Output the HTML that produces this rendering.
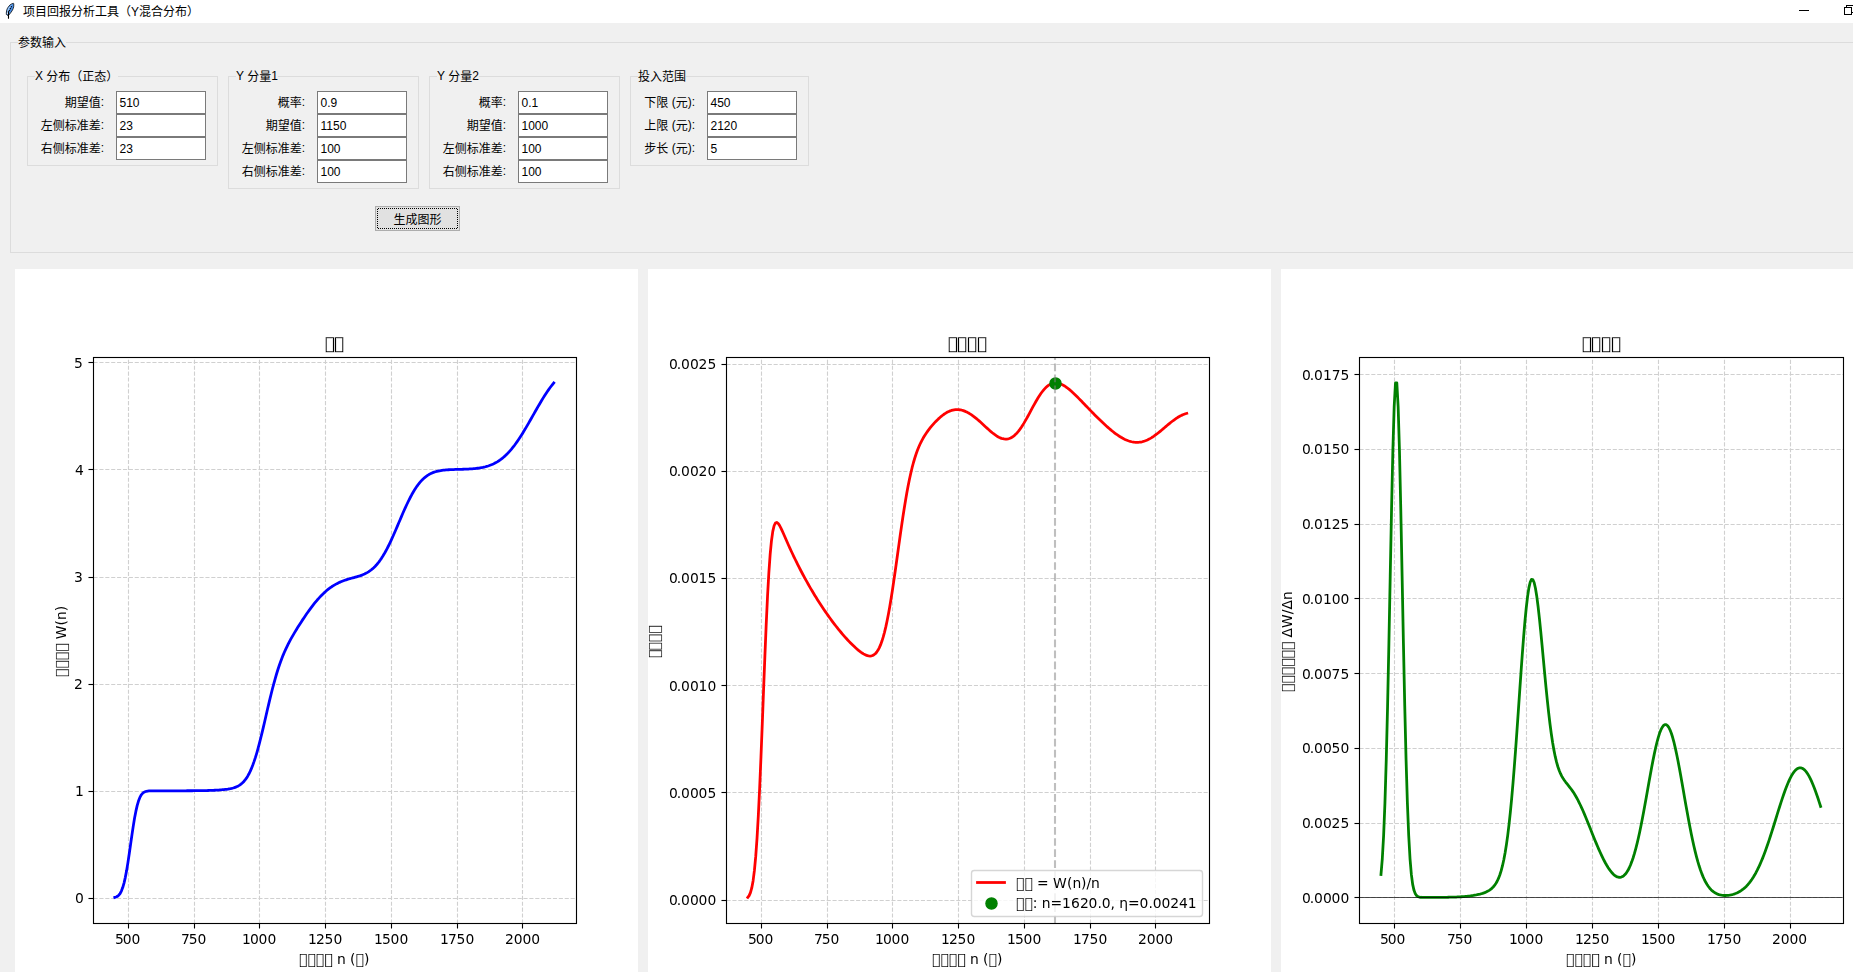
<!DOCTYPE html><html lang="zh-CN"><head><meta charset="utf-8"><title>项目回报分析工具（Y混合分布）</title><style>
*{box-sizing:border-box;margin:0;padding:0}
html,body{width:1853px;height:972px;overflow:hidden;background:#f0f0f0}
body{position:relative;font:12px/16px "Liberation Sans","Noto Sans CJK SC",sans-serif;color:#000}
.abs,.t,.lf,.lft,.en,.lb,.fig,.ico{position:absolute}
.titlebar{position:absolute;left:0;top:0;width:1853px;height:23px;background:#fff}
.t{white-space:nowrap;height:16px;line-height:16px}
.lf{border:1px solid #dcdcdc}
.lft{background:#f0f0f0;height:16px;line-height:16px;white-space:nowrap;padding:0}
.c{position:relative;top:1px}
.lb{height:16px;line-height:16px;white-space:nowrap;text-align:right}
.en{width:90px;height:23px;border:1px solid #7a7a7a;background:#fff;line-height:16px;padding:3px 0 0 2.5px;white-space:nowrap}
.btn{position:absolute;left:375px;top:206px;width:85px;height:25px;border:1px solid #adadad;border-radius:0;background:#e1e1e1;color:#000;font:inherit;text-align:center;line-height:16px;padding:4px 0 3px;display:block;appearance:none;-webkit-appearance:none;outline:0;cursor:default}
.fig{top:269px;will-change:transform}
</style></head><body>
<div class="titlebar"></div>
<svg class="ico" style="left:0;top:0" width="24" height="23" viewBox="0 0 24 23"><path d="M13.4 3.3L13.8 3.8L13.7 6.8Q13.4 8.4 12.5 10L11.2 12.1L9.6 14.1L8.5 15.5L7 15.1L6.3 14.3L6.4 12L6.8 10Q7.2 8.6 7.8 7.7L9.8 5.1Q11.4 3.7 13.4 3.3Z" fill="#4a8fe6" stroke="#000" stroke-opacity=".85" stroke-width=".9" stroke-linejoin="round"/><path d="M12.4 4.3Q10.4 5.4 8.6 7.8Q7.6 9.4 7.2 11.2L7 13.9L8 13.4Q8.3 10.8 9.6 8.4Q10.8 6.2 12.4 4.3Z" fill="#a4cefb"/><path d="M6.9 12.7h1v1.3h-1z" fill="#fff" fill-opacity=".9"/><path d="M8.5 18.3V11.6" stroke="#000" stroke-width="1.1" fill="none" stroke-linecap="round"/><path d="M9.1 11L11.7 6.2" stroke="#000" stroke-width="1.25" stroke-dasharray="1.15 .95" fill="none"/></svg>
<div class="t" style="left:23px;top:4px">项目回报分析工具（Y混合分布）</div>
<svg class="ico" style="left:1790px;top:0" width="63" height="23" viewBox="1790 0 63 23" shape-rendering="crispEdges"><path d="M1799 10.5H1809" stroke="#000" fill="none"/><path d="M1846.5 7V5.5H1853.5V12.5H1852" stroke="#000" fill="none"/><rect x="1844.5" y="7.5" width="7" height="7" stroke="#000" fill="none"/></svg>
<div class="lf" style="left:10px;top:42px;width:1900px;height:211px"></div><div class="lft" style="left:18px;top:34px"><span class="c">参数输入</span></div>
<div class="lf" style="left:27px;top:76px;width:191px;height:90px"></div><div class="lft" style="left:35px;top:68px">X <span class="c">分布（正态）</span></div>
<div class="lf" style="left:228px;top:76px;width:191px;height:113px"></div><div class="lft" style="left:236px;top:68px">Y <span class="c">分量</span>1</div>
<div class="lf" style="left:429px;top:76px;width:191px;height:113px"></div><div class="lft" style="left:437px;top:68px">Y <span class="c">分量</span>2</div>
<div class="lf" style="left:630px;top:76px;width:179px;height:90px"></div><div class="lft" style="left:638px;top:68px"><span class="c">投入范围</span></div>
<div class="lb" style="left:4px;top:94px;width:100px"><span class="c">期望值</span>:</div><div class="en" style="left:116px;top:91px">510</div>
<div class="lb" style="left:4px;top:117px;width:100px"><span class="c">左侧标准差</span>:</div><div class="en" style="left:116px;top:114px">23</div>
<div class="lb" style="left:4px;top:140px;width:100px"><span class="c">右侧标准差</span>:</div><div class="en" style="left:116px;top:137px">23</div>
<div class="lb" style="left:205px;top:94px;width:100px"><span class="c">概率</span>:</div><div class="en" style="left:317px;top:91px">0.9</div>
<div class="lb" style="left:205px;top:117px;width:100px"><span class="c">期望值</span>:</div><div class="en" style="left:317px;top:114px">1150</div>
<div class="lb" style="left:205px;top:140px;width:100px"><span class="c">左侧标准差</span>:</div><div class="en" style="left:317px;top:137px">100</div>
<div class="lb" style="left:205px;top:163px;width:100px"><span class="c">右侧标准差</span>:</div><div class="en" style="left:317px;top:160px">100</div>
<div class="lb" style="left:406px;top:94px;width:100px"><span class="c">概率</span>:</div><div class="en" style="left:518px;top:91px">0.1</div>
<div class="lb" style="left:406px;top:117px;width:100px"><span class="c">期望值</span>:</div><div class="en" style="left:518px;top:114px">1000</div>
<div class="lb" style="left:406px;top:140px;width:100px"><span class="c">左侧标准差</span>:</div><div class="en" style="left:518px;top:137px">100</div>
<div class="lb" style="left:406px;top:163px;width:100px"><span class="c">右侧标准差</span>:</div><div class="en" style="left:518px;top:160px">100</div>
<div class="lb" style="left:595px;top:94px;width:100px"><span class="c">下限</span> (<span class="c">元</span>):</div><div class="en" style="left:707px;top:91px">450</div>
<div class="lb" style="left:595px;top:117px;width:100px"><span class="c">上限</span> (<span class="c">元</span>):</div><div class="en" style="left:707px;top:114px">2120</div>
<div class="lb" style="left:595px;top:140px;width:100px"><span class="c">步长</span> (<span class="c">元</span>):</div><div class="en" style="left:707px;top:137px">5</div>
<button type="button" class="btn"><span class="c">生成图形</span></button>
<svg class="ico" style="left:375px;top:206px" width="85" height="25" viewBox="0 0 85 25" shape-rendering="crispEdges"><path d="M3 2.5H82M3 22.5H82M2.5 3V22M82.5 3V22" fill="none" stroke="#000" stroke-width="1" stroke-dasharray="1 1"/></svg>
<svg class="fig" style="left:15px" width="623" height="735" viewBox="0 0 623 735" font-family="'DejaVu Sans','Liberation Sans',sans-serif" fill="#000"><rect width="623" height="735" fill="#fff"/><path d="M113.5 654.5V88.5M179.5 654.5V88.5M244.5 654.5V88.5M310.5 654.5V88.5M376.5 654.5V88.5M442.5 654.5V88.5M507.5 654.5V88.5M78.5 629.5H561.5M78.5 522.5H561.5M78.5 415.5H561.5M78.5 308.5H561.5M78.5 200.5H561.5M78.5 93.5H561.5" stroke="#b0b0b0" stroke-opacity=".6" stroke-width="1.11" stroke-dasharray="4.11 1.78" fill="none"/><clipPath id="c0"><rect x="77.88" y="88.2" width="482.83" height="565.95"/></clipPath><polyline clip-path="url(#c0)" points="99.82,628.42 101.14,628.01 102.45,627.32 103.76,626.21 105.08,624.52 106.39,622.05 107.71,618.62 109.02,614.07 110.33,608.32 111.65,601.37 112.96,593.36 114.28,584.57 115.59,575.35 116.91,566.14 118.22,557.34 119.53,549.34 120.85,542.39 122.16,536.64 123.48,532.09 124.79,528.66 126.1,526.19 127.42,524.5 128.73,523.39 130.05,522.7 131.36,522.28 132.68,522.05 133.99,521.92 135.3,521.86 136.62,521.82 137.93,521.81 139.25,521.8 140.56,521.8 141.87,521.8 143.19,521.8 144.5,521.8 145.82,521.8 147.13,521.8 148.45,521.8 149.76,521.8 151.07,521.8 152.39,521.79 153.7,521.79 155.02,521.79 156.33,521.79 157.64,521.79 158.96,521.79 160.27,521.79 161.59,521.79 162.9,521.79 164.22,521.78 165.53,521.78 166.84,521.78 168.16,521.78 169.47,521.77 170.79,521.77 172.1,521.76 173.41,521.76 174.73,521.75 176.04,521.75 177.36,521.74 178.67,521.73 179.99,521.72 181.3,521.7 182.61,521.69 183.93,521.68 185.24,521.66 186.56,521.64 187.87,521.62 189.18,521.59 190.5,521.56 191.81,521.53 193.13,521.5 194.44,521.46 195.76,521.41 197.07,521.37 198.38,521.31 199.7,521.25 201.01,521.19 202.33,521.11 203.64,521.03 204.95,520.94 206.27,520.84 207.58,520.73 208.9,520.6 210.21,520.45 211.53,520.29 212.84,520.11 214.15,519.89 215.47,519.64 216.78,519.35 218.1,519.01 219.41,518.61 220.72,518.14 222.04,517.57 223.35,516.9 224.67,516.11 225.98,515.17 227.3,514.05 228.61,512.75 229.92,511.22 231.24,509.44 232.55,507.39 233.87,505.05 235.18,502.39 236.49,499.4 237.81,496.07 239.12,492.4 240.44,488.39 241.75,484.04 243.07,479.39 244.38,474.45 245.69,469.27 247.01,463.89 248.32,458.35 249.64,452.7 250.95,447.01 252.26,441.31 253.58,435.67 254.89,430.13 256.21,424.74 257.52,419.53 258.84,414.53 260.15,409.76 261.46,405.24 262.78,400.98 264.09,396.97 265.41,393.2 266.72,389.67 268.03,386.36 269.35,383.25 270.66,380.32 271.98,377.54 273.29,374.91 274.61,372.38 275.92,369.96 277.23,367.62 278.55,365.35 279.86,363.13 281.18,360.96 282.49,358.83 283.8,356.74 285.12,354.68 286.43,352.64 287.75,350.64 289.06,348.67 290.38,346.72 291.69,344.82 293,342.94 294.32,341.11 295.63,339.31 296.95,337.56 298.26,335.86 299.57,334.2 300.89,332.6 302.2,331.04 303.52,329.55 304.83,328.11 306.15,326.72 307.46,325.4 308.77,324.13 310.09,322.93 311.4,321.78 312.72,320.69 314.03,319.66 315.34,318.69 316.66,317.77 317.97,316.91 319.29,316.1 320.6,315.35 321.92,314.64 323.23,313.98 324.54,313.36 325.86,312.79 327.17,312.25 328.49,311.75 329.8,311.28 331.12,310.84 332.43,310.42 333.74,310.03 335.06,309.65 336.37,309.28 337.69,308.92 339,308.56 340.31,308.19 341.63,307.82 342.94,307.43 344.26,307.01 345.57,306.57 346.89,306.09 348.2,305.56 349.51,304.98 350.83,304.34 352.14,303.63 353.46,302.84 354.77,301.96 356.08,301 357.4,299.93 358.71,298.75 360.03,297.46 361.34,296.05 362.66,294.51 363.97,292.84 365.28,291.04 366.6,289.11 367.91,287.04 369.23,284.84 370.54,282.51 371.85,280.06 373.17,277.5 374.48,274.82 375.8,272.04 377.11,269.18 378.43,266.24 379.74,263.24 381.05,260.19 382.37,257.11 383.68,254.02 385,250.92 386.31,247.84 387.62,244.8 388.94,241.8 390.25,238.86 391.57,236 392.88,233.23 394.2,230.56 395.51,228 396.82,225.56 398.14,223.24 399.45,221.05 400.77,219 402.08,217.08 403.39,215.29 404.71,213.64 406.02,212.13 407.34,210.74 408.65,209.48 409.97,208.34 411.28,207.31 412.59,206.39 413.91,205.57 415.22,204.85 416.54,204.2 417.85,203.64 419.16,203.15 420.48,202.73 421.79,202.36 423.11,202.04 424.42,201.77 425.74,201.54 427.05,201.34 428.36,201.18 429.68,201.04 430.99,200.92 432.31,200.83 433.62,200.74 434.93,200.67 436.25,200.61 437.56,200.56 438.88,200.52 440.19,200.48 441.51,200.44 442.82,200.41 444.13,200.38 445.45,200.34 446.76,200.3 448.08,200.26 449.39,200.22 450.7,200.17 452.02,200.11 453.33,200.05 454.65,199.97 455.96,199.89 457.28,199.79 458.59,199.68 459.9,199.56 461.22,199.41 462.53,199.25 463.85,199.07 465.16,198.86 466.47,198.63 467.79,198.37 469.1,198.08 470.42,197.76 471.73,197.39 473.05,196.99 474.36,196.55 475.67,196.06 476.99,195.53 478.3,194.94 479.62,194.3 480.93,193.6 482.24,192.83 483.56,192.01 484.87,191.12 486.19,190.17 487.5,189.14 488.82,188.04 490.13,186.86 491.44,185.62 492.76,184.29 494.07,182.89 495.39,181.41 496.7,179.86 498.01,178.23 499.33,176.53 500.64,174.75 501.96,172.91 503.27,171 504.59,169.03 505.9,166.99 507.21,164.91 508.53,162.77 509.84,160.59 511.16,158.37 512.47,156.11 513.78,153.83 515.1,151.53 516.41,149.22 517.73,146.9 519.04,144.58 520.36,142.26 521.67,139.96 522.98,137.68 524.3,135.43 525.61,133.2 526.93,131.02 528.24,128.88 529.55,126.8 530.87,124.76 532.18,122.79 533.5,120.88 534.81,119.03 536.13,117.26 537.44,115.56 538.75,113.93" fill="none" stroke="#0000ff" stroke-width="2.78" stroke-linejoin="round" stroke-linecap="square"/><path d="M113.5 654.5v5M179.5 654.5v5M244.5 654.5v5M310.5 654.5v5M376.5 654.5v5M442.5 654.5v5M507.5 654.5v5M78.5 629.5h-5M78.5 522.5h-5M78.5 415.5h-5M78.5 308.5h-5M78.5 200.5h-5M78.5 93.5h-5" stroke="#000" stroke-width="1.11" fill="none"/><path d="M77.94 88.5H562.06M77.94 654.5H562.06M78.5 629.5h-5M78.5 522.5h-5M78.5 415.5h-5M78.5 308.5h-5M78.5 200.5h-5M78.5 93.5h-5" stroke="#000" stroke-opacity=".055" stroke-width="3" fill="none"/><path d="M78.5 88.5H561.5V654.5H78.5Z" stroke="#000" stroke-width="1.11" fill="none" stroke-linejoin="miter"/><text x="100 107.75 116.5" y="675" font-size="13.89">500</text><text x="166 173.75 182.5" y="675" font-size="13.89">750</text><text x="227 234.88 243.62 252.38" y="675" font-size="13.89">1000</text><text x="293 300.88 309.62 318.38" y="675" font-size="13.89">1250</text><text x="359 366.88 375.62 384.38" y="675" font-size="13.89">1500</text><text x="425 432.88 441.62 450.38" y="675" font-size="13.89">1750</text><text x="490 498.75 507.5 516.25" y="675" font-size="13.89">2000</text><text x="60" y="634" font-size="13.89">0</text><text x="60" y="527" font-size="13.89">1</text><text x="59" y="420" font-size="13.89">2</text><text x="59" y="313" font-size="13.89">3</text><text x="60" y="206" font-size="13.89">4</text><text x="59" y="99" font-size="13.89">5</text><text transform="translate(282.85 695.99) scale(1.4110 1.2445)" font-size="13.89" stroke="#fff" stroke-width=".18">▯</text><text transform="translate(291.25 695.99) scale(1.3797 1.2445)" font-size="13.89" stroke="#fff" stroke-width=".18">▯</text><text transform="translate(299.53 695.99) scale(1.4110 1.2445)" font-size="13.89" stroke="#fff" stroke-width=".18">▯</text><text transform="translate(308.01 695.99) scale(1.4110 1.2445)" font-size="13.89" stroke="#fff" stroke-width=".18">▯</text><text x="321.88 330.62 335" y="695" font-size="13.89">n (</text><text transform="translate(339.21 695.99) scale(1.4110 1.2445)" font-size="13.89" stroke="#fff" stroke-width=".18">▯</text><text x="348.88" y="695" font-size="13.89">)</text><text transform="translate(308.62 80.67) scale(1.3920 1.1942)" font-size="16.67" stroke="#fff" stroke-width=".18">▯</text><text transform="translate(317.63 80.67) scale(1.3849 1.1942)" font-size="16.67" stroke="#fff" stroke-width=".18">▯</text><g transform="translate(51 408) rotate(-90)"><text transform="translate(-1.14 0.99) scale(1.4092 1.2445)" font-size="13.89" stroke="#fff" stroke-width=".18">▯</text><text transform="translate(7.25 0.99) scale(1.3760 1.2445)" font-size="13.89" stroke="#fff" stroke-width=".18">▯</text><text transform="translate(15.53 0.99) scale(1.4092 1.2445)" font-size="13.89" stroke="#fff" stroke-width=".18">▯</text><text transform="translate(24.02 0.99) scale(1.4086 1.2445)" font-size="13.89" stroke="#fff" stroke-width=".18">▯</text><text x="37.88 51.62 57.12 65.88" y="0" font-size="13.89">W(n)</text></g></svg>
<svg class="fig" style="left:648px" width="623" height="735" viewBox="0 0 623 735" font-family="'DejaVu Sans','Liberation Sans',sans-serif" fill="#000"><rect width="623" height="735" fill="#fff"/><path d="M113.5 654.5V88.5M179.5 654.5V88.5M244.5 654.5V88.5M310.5 654.5V88.5M376.5 654.5V88.5M442.5 654.5V88.5M507.5 654.5V88.5M78.5 631.5H561.5M78.5 523.5H561.5M78.5 416.5H561.5M78.5 309.5H561.5M78.5 202.5H561.5M78.5 95.5H561.5" stroke="#b0b0b0" stroke-opacity=".6" stroke-width="1.11" stroke-dasharray="4.11 1.78" fill="none"/><clipPath id="c1"><rect x="77.88" y="88.2" width="482.83" height="565.95"/></clipPath><polyline clip-path="url(#c1)" points="99.82,628.42 101.14,626.63 102.45,623.67 103.76,618.97 105.08,611.88 106.39,601.69 107.71,587.68 109.02,569.35 110.33,546.46 111.65,519.21 112.96,488.29 114.28,454.85 115.59,420.4 116.91,386.61 118.22,355.11 119.53,327.22 120.85,303.84 122.16,285.36 123.48,271.69 124.79,262.39 126.1,256.76 127.42,254.02 128.73,253.42 130.05,254.31 131.36,256.16 132.68,258.6 133.99,261.37 135.3,264.3 136.62,267.29 137.93,270.3 139.25,273.28 140.56,276.22 141.87,279.12 143.19,281.97 144.5,284.78 145.82,287.55 147.13,290.27 148.45,292.95 149.76,295.59 151.07,298.18 152.39,300.74 153.7,303.26 155.02,305.73 156.33,308.17 157.64,310.58 158.96,312.94 160.27,315.28 161.59,317.57 162.9,319.84 164.22,322.07 165.53,324.27 166.84,326.43 168.16,328.56 169.47,330.67 170.79,332.74 172.1,334.78 173.41,336.79 174.73,338.77 176.04,340.72 177.36,342.65 178.67,344.54 179.99,346.41 181.3,348.24 182.61,350.05 183.93,351.83 185.24,353.59 186.56,355.31 187.87,357.01 189.18,358.68 190.5,360.32 191.81,361.93 193.13,363.51 194.44,365.06 195.76,366.58 197.07,368.07 198.38,369.53 199.7,370.96 201.01,372.36 202.33,373.72 203.64,375.05 204.95,376.34 206.27,377.59 207.58,378.8 208.9,379.96 210.21,381.07 211.53,382.12 212.84,383.11 214.15,384.02 215.47,384.85 216.78,385.57 218.1,386.18 219.41,386.64 220.72,386.94 222.04,387.03 223.35,386.9 224.67,386.5 225.98,385.78 227.3,384.71 228.61,383.23 229.92,381.3 231.24,378.87 232.55,375.9 233.87,372.34 235.18,368.16 236.49,363.35 237.81,357.89 239.12,351.77 240.44,345.03 241.75,337.69 243.07,329.8 244.38,321.43 245.69,312.65 247.01,303.56 248.32,294.24 249.64,284.81 250.95,275.37 252.26,266.03 253.58,256.88 254.89,248.02 256.21,239.52 257.52,231.44 258.84,223.85 260.15,216.77 261.46,210.22 262.78,204.21 264.09,198.73 265.41,193.75 266.72,189.25 268.03,185.2 269.35,181.54 270.66,178.25 271.98,175.27 273.29,172.56 274.61,170.09 275.92,167.81 277.23,165.7 278.55,163.74 279.86,161.88 281.18,160.13 282.49,158.46 283.8,156.87 285.12,155.35 286.43,153.89 287.75,152.49 289.06,151.16 290.38,149.89 291.69,148.69 293,147.56 294.32,146.5 295.63,145.52 296.95,144.62 298.26,143.81 299.57,143.08 300.89,142.44 302.2,141.9 303.52,141.45 304.83,141.09 306.15,140.83 307.46,140.67 308.77,140.6 310.09,140.63 311.4,140.75 312.72,140.97 314.03,141.27 315.34,141.67 316.66,142.15 317.97,142.71 319.29,143.35 320.6,144.06 321.92,144.84 323.23,145.69 324.54,146.6 325.86,147.57 327.17,148.59 328.49,149.66 329.8,150.76 331.12,151.9 332.43,153.07 333.74,154.26 335.06,155.47 336.37,156.68 337.69,157.9 339,159.11 340.31,160.3 341.63,161.47 342.94,162.61 344.26,163.7 345.57,164.74 346.89,165.72 348.2,166.63 349.51,167.46 350.83,168.2 352.14,168.83 353.46,169.34 354.77,169.74 356.08,169.99 357.4,170.11 358.71,170.07 360.03,169.88 361.34,169.51 362.66,168.98 363.97,168.27 365.28,167.39 366.6,166.33 367.91,165.09 369.23,163.69 370.54,162.12 371.85,160.39 373.17,158.52 374.48,156.51 375.8,154.39 377.11,152.16 378.43,149.85 379.74,147.48 381.05,145.05 382.37,142.6 383.68,140.15 385,137.71 386.31,135.31 387.62,132.96 388.94,130.7 390.25,128.52 391.57,126.46 392.88,124.53 394.2,122.74 395.51,121.09 396.82,119.61 398.14,118.29 399.45,117.15 400.77,116.18 402.08,115.39 403.39,114.77 404.71,114.32 406.02,114.04 407.34,113.93 408.65,113.96 409.97,114.14 411.28,114.47 412.59,114.92 413.91,115.49 415.22,116.16 416.54,116.94 417.85,117.81 419.16,118.76 420.48,119.78 421.79,120.87 423.11,122.01 424.42,123.2 425.74,124.42 427.05,125.69 428.36,126.98 429.68,128.29 430.99,129.62 432.31,130.97 433.62,132.33 434.93,133.69 436.25,135.06 437.56,136.43 438.88,137.8 440.19,139.16 441.51,140.53 442.82,141.88 444.13,143.23 445.45,144.57 446.76,145.9 448.08,147.22 449.39,148.53 450.7,149.82 452.02,151.1 453.33,152.37 454.65,153.61 455.96,154.84 457.28,156.05 458.59,157.24 459.9,158.4 461.22,159.54 462.53,160.65 463.85,161.73 465.16,162.78 466.47,163.79 467.79,164.77 469.1,165.71 470.42,166.61 471.73,167.47 473.05,168.28 474.36,169.04 475.67,169.75 476.99,170.4 478.3,171 479.62,171.53 480.93,172 482.24,172.4 483.56,172.74 484.87,173.01 486.19,173.2 487.5,173.32 488.82,173.37 490.13,173.33 491.44,173.22 492.76,173.04 494.07,172.77 495.39,172.43 496.7,172.01 498.01,171.52 499.33,170.95 500.64,170.32 501.96,169.62 503.27,168.85 504.59,168.03 505.9,167.15 507.21,166.22 508.53,165.24 509.84,164.23 511.16,163.18 512.47,162.1 513.78,161.01 515.1,159.89 516.41,158.77 517.73,157.65 519.04,156.54 520.36,155.43 521.67,154.35 522.98,153.29 524.3,152.26 525.61,151.27 526.93,150.32 528.24,149.42 529.55,148.56 530.87,147.77 532.18,147.04 533.5,146.37 534.81,145.76 536.13,145.23 537.44,144.76 538.75,144.37" fill="none" stroke="#ff0000" stroke-width="2.78" stroke-linejoin="round" stroke-linecap="square"/><circle cx="407.5" cy="114.5" r="5.56" fill="#008000" stroke="#008000" stroke-width="1.39"/><path d="M407 654.15V88.2" stroke="#808080" stroke-opacity=".5" stroke-width="2.08" stroke-dasharray="7.71 3.33" fill="none"/><path d="M113.5 654.5v5M179.5 654.5v5M244.5 654.5v5M310.5 654.5v5M376.5 654.5v5M442.5 654.5v5M507.5 654.5v5M78.5 631.5h-5M78.5 523.5h-5M78.5 416.5h-5M78.5 309.5h-5M78.5 202.5h-5M78.5 95.5h-5" stroke="#000" stroke-width="1.11" fill="none"/><path d="M77.94 88.5H562.06M77.94 654.5H562.06M78.5 631.5h-5M78.5 523.5h-5M78.5 416.5h-5M78.5 309.5h-5M78.5 202.5h-5M78.5 95.5h-5" stroke="#000" stroke-opacity=".055" stroke-width="3" fill="none"/><path d="M78.5 88.5H561.5V654.5H78.5Z" stroke="#000" stroke-width="1.11" fill="none" stroke-linejoin="miter"/><text x="100 107.75 116.5" y="675" font-size="13.89">500</text><text x="166 173.75 182.5" y="675" font-size="13.89">750</text><text x="227 234.88 243.62 252.38" y="675" font-size="13.89">1000</text><text x="293 300.88 309.62 318.38" y="675" font-size="13.89">1250</text><text x="359 366.88 375.62 384.38" y="675" font-size="13.89">1500</text><text x="425 432.88 441.62 450.38" y="675" font-size="13.89">1750</text><text x="490 498.75 507.5 516.25" y="675" font-size="13.89">2000</text><text x="21 28.75 33.12 41.88 50.62 59.38" y="636" font-size="13.89">0.0000</text><text x="21 28.75 33.12 41.88 50.62 59.38" y="529" font-size="13.89">0.0005</text><text x="21 28.75 33.12 41.88 50.62 59.5" y="422" font-size="13.89">0.0010</text><text x="21 28.75 33.12 41.88 50.62 59.5" y="314" font-size="13.89">0.0015</text><text x="21 28.75 33.12 41.88 50.62 59.38" y="207" font-size="13.89">0.0020</text><text x="21 28.75 33.12 41.88 50.62 59.38" y="100" font-size="13.89">0.0025</text><text transform="translate(282.85 695.99) scale(1.4110 1.2445)" font-size="13.89" stroke="#fff" stroke-width=".18">▯</text><text transform="translate(291.25 695.99) scale(1.3797 1.2445)" font-size="13.89" stroke="#fff" stroke-width=".18">▯</text><text transform="translate(299.53 695.99) scale(1.4110 1.2445)" font-size="13.89" stroke="#fff" stroke-width=".18">▯</text><text transform="translate(308.01 695.99) scale(1.4110 1.2445)" font-size="13.89" stroke="#fff" stroke-width=".18">▯</text><text x="321.88 330.62 335" y="695" font-size="13.89">n (</text><text transform="translate(339.21 695.99) scale(1.4110 1.2445)" font-size="13.89" stroke="#fff" stroke-width=".18">▯</text><text x="348.88" y="695" font-size="13.89">)</text><text transform="translate(298.62 80.67) scale(1.3920 1.1942)" font-size="16.67" stroke="#fff" stroke-width=".18">▯</text><text transform="translate(307.63 80.67) scale(1.3849 1.1942)" font-size="16.67" stroke="#fff" stroke-width=".18">▯</text><text transform="translate(317.63 80.67) scale(1.3849 1.1942)" font-size="16.67" stroke="#fff" stroke-width=".18">▯</text><text transform="translate(327.63 80.67) scale(1.3849 1.1942)" font-size="16.67" stroke="#fff" stroke-width=".18">▯</text><g transform="translate(11 389) rotate(-90)"><text transform="translate(-1.14 0.99) scale(1.4098 1.2445)" font-size="13.89" stroke="#fff" stroke-width=".18">▯</text><text transform="translate(6.28 0.99) scale(1.4032 1.2445)" font-size="13.89" stroke="#fff" stroke-width=".18">▯</text><text transform="translate(14.53 0.99) scale(1.4092 1.2445)" font-size="13.89" stroke="#fff" stroke-width=".18">▯</text><text transform="translate(23.02 0.99) scale(1.4086 1.2445)" font-size="13.89" stroke="#fff" stroke-width=".18">▯</text></g><rect x="323.5" y="601.5" width="231" height="46" rx="2.78" fill="#fff" fill-opacity=".8" stroke="#ccc" stroke-opacity=".8" stroke-width="1.39"/><path d="M329.5 613.5H356.5" stroke="#ff0000" stroke-width="2.78" stroke-linecap="square" fill="none"/><circle cx="343.5" cy="634.5" r="5.56" fill="#008000" stroke="#008000" stroke-width="1.39"/><text transform="translate(366.85 619.99) scale(1.4110 1.2445)" font-size="13.89" stroke="#fff" stroke-width=".18">▯</text><text transform="translate(375.19 619.99) scale(1.3893 1.2445)" font-size="13.89" stroke="#fff" stroke-width=".18">▯</text><text x="389.12 400.75 405.12 418.88 424.38 433.12 438.5 443.12" y="619" font-size="13.89">= W(n)/n</text><text transform="translate(366.84 639.99) scale(1.4117 1.2445)" font-size="13.89" stroke="#fff" stroke-width=".18">▯</text><text transform="translate(375.19 639.99) scale(1.3892 1.2445)" font-size="13.89" stroke="#fff" stroke-width=".18">▯</text><text x="384.75 389.38 393.75 402.5 414.12 423 431.88 440.62 449.38 453.75 462.5 466.88 471.25 480 491.62 500.38 504.75 513.5 522.25 531 539.75" y="639" font-size="13.89">: n=1620.0, η=0.00241</text></svg>
<svg class="fig" style="left:1281px" width="624" height="735" viewBox="0 0 624 735" font-family="'DejaVu Sans','Liberation Sans',sans-serif" fill="#000"><rect width="624" height="735" fill="#fff"/><path d="M113.5 654.5V88.5M179.5 654.5V88.5M245.5 654.5V88.5M311.5 654.5V88.5M377.5 654.5V88.5M443.5 654.5V88.5M509.5 654.5V88.5M78.5 628.5H562.5M78.5 554.5H562.5M78.5 479.5H562.5M78.5 404.5H562.5M78.5 329.5H562.5M78.5 255.5H562.5M78.5 180.5H562.5M78.5 105.5H562.5" stroke="#b0b0b0" stroke-opacity=".6" stroke-width="1.11" stroke-dasharray="4.11 1.78" fill="none"/><clipPath id="c2"><rect x="78" y="88.2" width="483.6" height="565.95"/></clipPath><polyline clip-path="url(#c2)" points="99.98,605.41 101.3,589.79 102.62,566.56 103.94,533.93 105.26,490.72 106.58,436.97 107.9,374.49 109.22,307.1 110.54,240.52 111.86,181.69 113.18,137.58 114.5,113.93 115.82,113.93 117.14,137.58 118.47,181.69 119.79,240.52 121.11,307.1 122.43,374.49 123.75,436.97 125.07,490.72 126.39,533.93 127.71,566.56 129.03,589.79 130.35,605.4 131.67,615.34 132.99,621.33 134.31,624.75 135.63,626.61 136.95,627.57 138.27,628.04 139.59,628.26 140.91,628.35 142.23,628.39 143.55,628.41 144.87,628.41 146.19,628.41 147.51,628.41 148.83,628.41 150.15,628.4 151.47,628.4 152.79,628.4 154.11,628.39 155.43,628.38 156.75,628.38 158.07,628.37 159.39,628.36 160.71,628.35 162.03,628.33 163.35,628.32 164.67,628.3 165.99,628.28 167.31,628.25 168.63,628.23 169.95,628.19 171.27,628.16 172.59,628.12 173.91,628.07 175.23,628.02 176.56,627.96 177.88,627.9 179.2,627.83 180.52,627.75 181.84,627.65 183.16,627.55 184.48,627.44 185.8,627.32 187.12,627.18 188.44,627.03 189.76,626.86 191.08,626.67 192.4,626.47 193.72,626.24 195.04,626 196.36,625.73 197.68,625.43 199,625.1 200.32,624.73 201.64,624.33 202.96,623.87 204.28,623.36 205.6,622.78 206.92,622.1 208.24,621.33 209.56,620.41 210.88,619.32 212.2,618.02 213.52,616.46 214.84,614.56 216.16,612.25 217.48,609.44 218.8,606.03 220.12,601.91 221.44,596.96 222.76,591.04 224.08,584.04 225.4,575.84 226.72,566.32 228.04,555.41 229.36,543.07 230.68,529.28 232,514.1 233.32,497.64 234.65,480.06 235.97,461.61 237.29,442.58 238.61,423.36 239.93,404.34 241.25,385.96 242.57,368.69 243.89,352.98 245.21,339.25 246.53,327.87 247.85,319.15 249.17,313.29 250.49,310.41 251.81,310.52 253.13,313.52 254.45,319.22 255.77,327.34 257.09,337.51 258.41,349.34 259.73,362.39 261.05,376.23 262.37,390.41 263.69,404.56 265.01,418.32 266.33,431.41 267.65,443.6 268.97,454.74 270.29,464.72 271.61,473.52 272.93,481.15 274.25,487.66 275.57,493.16 276.89,497.75 278.21,501.55 279.53,504.71 280.85,507.34 282.17,509.57 283.49,511.53 284.81,513.29 286.13,514.96 287.45,516.6 288.77,518.27 290.09,520.01 291.42,521.87 292.74,523.85 294.06,525.98 295.38,528.26 296.7,530.69 298.02,533.27 299.34,535.99 300.66,538.84 301.98,541.8 303.3,544.87 304.62,548.01 305.94,551.23 307.26,554.49 308.58,557.78 309.9,561.09 311.22,564.4 312.54,567.69 313.86,570.94 315.18,574.14 316.5,577.28 317.82,580.34 319.14,583.3 320.46,586.16 321.78,588.9 323.1,591.52 324.42,593.99 325.74,596.31 327.06,598.46 328.38,600.44 329.7,602.23 331.02,603.82 332.34,605.19 333.66,606.34 334.98,607.24 336.3,607.89 337.62,608.26 338.94,608.33 340.26,608.09 341.58,607.52 342.9,606.59 344.22,605.3 345.54,603.61 346.86,601.52 348.18,598.99 349.51,596.03 350.83,592.62 352.15,588.76 353.47,584.43 354.79,579.65 356.11,574.43 357.43,568.78 358.75,562.73 360.07,556.31 361.39,549.57 362.71,542.56 364.03,535.32 365.35,527.95 366.67,520.49 367.99,513.05 369.31,505.69 370.63,498.52 371.95,491.63 373.27,485.1 374.59,479.02 375.91,473.49 377.23,468.58 378.55,464.37 379.87,460.93 381.19,458.3 382.51,456.52 383.83,455.64 385.15,455.65 386.47,456.57 387.79,458.37 389.11,461.04 390.43,464.52 391.75,468.77 393.07,473.73 394.39,479.31 395.71,485.44 397.03,492.04 398.35,499.02 399.67,506.28 400.99,513.74 402.31,521.3 403.63,528.89 404.95,536.43 406.28,543.84 407.6,551.06 408.92,558.03 410.24,564.71 411.56,571.06 412.88,577.04 414.2,582.64 415.52,587.84 416.84,592.64 418.16,597.04 419.48,601.03 420.8,604.64 422.12,607.88 423.44,610.76 424.76,613.31 426.08,615.56 427.4,617.51 428.72,619.21 430.04,620.67 431.36,621.91 432.68,622.96 434,623.83 435.32,624.55 436.64,625.14 437.96,625.6 439.28,625.96 440.6,626.22 441.92,626.39 443.24,626.49 444.56,626.51 445.88,626.46 447.2,626.35 448.52,626.17 449.84,625.93 451.16,625.63 452.48,625.26 453.8,624.82 455.12,624.31 456.44,623.72 457.76,623.05 459.08,622.29 460.4,621.43 461.72,620.47 463.04,619.4 464.37,618.22 465.69,616.91 467.01,615.47 468.33,613.89 469.65,612.17 470.97,610.29 472.29,608.26 473.61,606.06 474.93,603.7 476.25,601.17 477.57,598.47 478.89,595.6 480.21,592.56 481.53,589.35 482.85,585.99 484.17,582.46 485.49,578.8 486.81,574.99 488.13,571.07 489.45,567.04 490.77,562.92 492.09,558.73 493.41,554.49 494.73,550.22 496.05,545.95 497.37,541.71 498.69,537.51 500.01,533.39 501.33,529.38 502.65,525.51 503.97,521.79 505.29,518.27 506.61,514.97 507.93,511.92 509.25,509.13 510.57,506.64 511.89,504.46 513.21,502.62 514.53,501.12 515.85,499.99 517.17,499.23 518.49,498.84 519.81,498.84 521.13,499.22 522.46,499.98 523.78,501.11 525.1,502.61 526.42,504.45 527.74,506.62 529.06,509.11 530.38,511.89 531.7,514.94 533.02,518.24 534.34,521.75 535.66,525.45 536.98,529.32 538.3,533.32 539.62,537.42" fill="none" stroke="#008000" stroke-width="2.78" stroke-linejoin="round" stroke-linecap="square"/><path d="M78 628.5H561.6" stroke="#000" stroke-width="0.69" fill="none"/><path d="M113.5 654.5v5M179.5 654.5v5M245.5 654.5v5M311.5 654.5v5M377.5 654.5v5M443.5 654.5v5M509.5 654.5v5M78.5 628.5h-5M78.5 554.5h-5M78.5 479.5h-5M78.5 404.5h-5M78.5 329.5h-5M78.5 255.5h-5M78.5 180.5h-5M78.5 105.5h-5" stroke="#000" stroke-width="1.11" fill="none"/><path d="M77.94 88.5H563.06M77.94 654.5H563.06M78.5 628.5h-5M78.5 554.5h-5M78.5 479.5h-5M78.5 404.5h-5M78.5 329.5h-5M78.5 255.5h-5M78.5 180.5h-5M78.5 105.5h-5" stroke="#000" stroke-opacity=".055" stroke-width="3" fill="none"/><path d="M78.5 88.5H562.5V654.5H78.5Z" stroke="#000" stroke-width="1.11" fill="none" stroke-linejoin="miter"/><text x="99 106.75 115.5" y="675" font-size="13.89">500</text><text x="166 173.75 182.5" y="675" font-size="13.89">750</text><text x="228 235.88 244.62 253.38" y="675" font-size="13.89">1000</text><text x="294 301.88 310.62 319.38" y="675" font-size="13.89">1250</text><text x="360 367.88 376.62 385.38" y="675" font-size="13.89">1500</text><text x="426 433.88 442.62 451.38" y="675" font-size="13.89">1750</text><text x="491 499.75 508.5 517.25" y="675" font-size="13.89">2000</text><text x="21 28.75 33.12 41.88 50.62 59.38" y="634" font-size="13.89">0.0000</text><text x="21 28.75 33.12 41.88 50.62 59.38" y="559" font-size="13.89">0.0025</text><text x="21 28.75 33.12 41.88 50.62 59.38" y="484" font-size="13.89">0.0050</text><text x="21 28.75 33.12 41.88 50.62 59.38" y="410" font-size="13.89">0.0075</text><text x="21 28.75 33.12 41.88 50.75 59.5" y="335" font-size="13.89">0.0100</text><text x="21 28.75 33.12 41.88 50.75 59.5" y="260" font-size="13.89">0.0125</text><text x="21 28.75 33.12 41.88 50.75 59.5" y="185" font-size="13.89">0.0150</text><text x="21 28.75 33.12 41.88 50.75 59.5" y="111" font-size="13.89">0.0175</text><text transform="translate(283.85 695.99) scale(1.4110 1.2445)" font-size="13.89" stroke="#fff" stroke-width=".18">▯</text><text transform="translate(292.25 695.99) scale(1.3797 1.2445)" font-size="13.89" stroke="#fff" stroke-width=".18">▯</text><text transform="translate(300.53 695.99) scale(1.4110 1.2445)" font-size="13.89" stroke="#fff" stroke-width=".18">▯</text><text transform="translate(309.01 695.99) scale(1.4110 1.2445)" font-size="13.89" stroke="#fff" stroke-width=".18">▯</text><text x="322.88 331.62 336" y="695" font-size="13.89">n (</text><text transform="translate(340.21 695.99) scale(1.4110 1.2445)" font-size="13.89" stroke="#fff" stroke-width=".18">▯</text><text x="349.88" y="695" font-size="13.89">)</text><text transform="translate(299.62 80.67) scale(1.3920 1.1942)" font-size="16.67" stroke="#fff" stroke-width=".18">▯</text><text transform="translate(308.63 80.67) scale(1.3849 1.1942)" font-size="16.67" stroke="#fff" stroke-width=".18">▯</text><text transform="translate(318.63 80.67) scale(1.3849 1.1942)" font-size="16.67" stroke="#fff" stroke-width=".18">▯</text><text transform="translate(328.63 80.67) scale(1.3849 1.1942)" font-size="16.67" stroke="#fff" stroke-width=".18">▯</text><g transform="translate(11 423) rotate(-90)"><text transform="translate(-1.14 0.99) scale(1.4092 1.2445)" font-size="13.89" stroke="#fff" stroke-width=".18">▯</text><text transform="translate(7.25 0.99) scale(1.3760 1.2445)" font-size="13.89" stroke="#fff" stroke-width=".18">▯</text><text transform="translate(15.53 0.99) scale(1.4092 1.2445)" font-size="13.89" stroke="#fff" stroke-width=".18">▯</text><text transform="translate(24.02 0.99) scale(1.4086 1.2445)" font-size="13.89" stroke="#fff" stroke-width=".18">▯</text><text transform="translate(32.21 0.99) scale(1.4080 1.2445)" font-size="13.89" stroke="#fff" stroke-width=".18">▯</text><text transform="translate(40.69 0.99) scale(1.4092 1.2445)" font-size="13.89" stroke="#fff" stroke-width=".18">▯</text><text x="54.62 64.12 77.88 82.5 92" y="0" font-size="13.89">ΔW/Δn</text></g></svg>
</body></html>
